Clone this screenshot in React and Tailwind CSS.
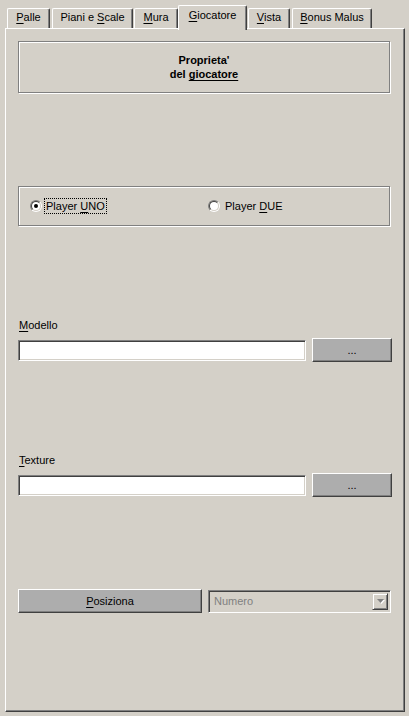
import React from "react";

const U = ({ children }) => <span className="underline underline-offset-[2px]">{children}</span>;

function Tab({ children, w, ml, selected }) {
  if (selected) {
    return (
      <div
        className={`relative z-10 ${ml} ${w} h-[25px] -mb-[2px] bg-[#d4d0c8] border-t border-l border-white border-r border-r-[#404040] shadow-[inset_-1px_0_#808080] rounded-t-[2px] flex justify-center pt-[2px]`}
      >
        <span className="leading-[14px]">{children}</span>
      </div>
    );
  }
  return (
    <div
      className={`${ml} ${w} h-[20px] bg-[#d4d0c8] border-t border-l border-white border-r border-r-[#404040] shadow-[inset_-1px_0_#808080] rounded-t-[2px] flex justify-center pt-[1px]`}
    >
      <span className="leading-[14px]">{children}</span>
    </div>
  );
}

function Radio({ checked }) {
  return (
    <span className="box-border w-[12px] h-[12px] rounded-full border border-t-[#808080] border-l-[#808080] border-b-white border-r-white flex">
      <span className="box-border w-full h-full rounded-full border border-t-[#404040] border-l-[#404040] border-b-[#d4d0c8] border-r-[#d4d0c8] bg-white flex items-center justify-center">
        {checked && <span className="w-[4px] h-[4px] rounded-full bg-black" />}
      </span>
    </span>
  );
}

function GrayButton({ children, w, h }) {
  return (
    <div
      className={`${w} ${h} box-border bg-[#adadad] border-t border-l border-white border-r border-b border-r-[#404040] border-b-[#404040] shadow-[inset_-1px_-1px_#808080] flex items-center justify-center leading-[14px]`}
    >
      {children}
    </div>
  );
}

function TextInput() {
  return (
    <div className="w-[288px] h-[21px] box-border bg-white border border-t-[#808080] border-l-[#808080] border-b-white border-r-white shadow-[inset_1px_1px_#404040,inset_-1px_-1px_#d4d0c8]" />
  );
}

export default function App() {
  return (
    <div className="w-[409px] h-[716px] bg-[#d4d0c8] font-['Liberation_Sans',Arial,sans-serif] text-[11px] text-black overflow-hidden">
      {/* tabs */}
      <div className="h-[28px] flex items-end">
        <Tab w="w-[43px]" ml="ml-[7px]"><U>P</U>alle</Tab>
        <Tab w="w-[81px]" ml="ml-[2px]">Piani e <U>S</U>cale</Tab>
        <Tab w="w-[44px]" ml="ml-[1px]"><U>M</U>ura</Tab>
        <Tab w="w-[69px]" ml="ml-0" selected><U>G</U>iocatore</Tab>
        <Tab w="w-[42px]" ml="ml-[1px]"><U>V</U>ista</Tab>
        <Tab w="w-[80px]" ml="ml-[2px]"><U>B</U>onus Malus</Tab>
      </div>

      {/* panel */}
      <div className="ml-[5px] w-[400px] h-[684px] box-border border-t border-l border-white border-r border-b border-r-[#404040] border-b-[#404040] shadow-[inset_-1px_-1px_#808080] pl-[12px] flex flex-col">
        {/* group 1 */}
        <div className="mt-[12px] w-[372px] h-[52px] box-border border border-[#808080] shadow-[inset_1px_1px_#fff,1px_1px_#fff] flex flex-col items-center justify-center font-bold leading-[14px]">
          <span>Proprieta'</span>
          <span>
            del <U>giocatore</U>
          </span>
        </div>

        {/* radio group */}
        <div className="mt-[93px] w-[372px] h-[40px] box-border border border-[#808080] shadow-[inset_1px_1px_#fff,1px_1px_#fff] flex items-center pl-[11px]">
          <div className="w-[178px] flex items-center">
            <Radio checked />
            <span className="ml-[2px] h-[16px] px-[1px] border border-dotted border-black flex items-center leading-[14px]">
              <span>
                Player <U>U</U>NO
              </span>
            </span>
          </div>
          <div className="flex items-center">
            <Radio />
            <span className="ml-[5px] leading-[14px]">
              Player <U>D</U>UE
            </span>
          </div>
        </div>

        {/* Modello */}
        <div className="mt-[92px] h-[14px] leading-[14px] pl-[1px]">
          <U>M</U>odello
        </div>
        <div className="mt-[6px] h-[24px] flex items-center">
          <TextInput />
          <div className="ml-[6px]">
            <GrayButton w="w-[80px]" h="h-[24px]">...</GrayButton>
          </div>
        </div>

        {/* Texture */}
        <div className="mt-[91px] h-[14px] leading-[14px] pl-[1px]">
          <U>T</U>exture
        </div>
        <div className="mt-[6px] h-[24px] flex items-center">
          <TextInput />
          <div className="ml-[6px]">
            <GrayButton w="w-[80px]" h="h-[24px]">...</GrayButton>
          </div>
        </div>

        {/* Posiziona row */}
        <div className="mt-[92px] h-[24px] flex items-center">
          <GrayButton w="w-[184px]" h="h-[24px]">
            <span>
              <U>P</U>osiziona
            </span>
          </GrayButton>
          <div className="ml-[6px] w-[183px] h-[23px] box-border bg-[#d4d0c8] border border-t-[#808080] border-l-[#808080] border-b-white border-r-white shadow-[inset_1px_1px_#404040,inset_-1px_-1px_#d4d0c8] flex items-center p-[2px]">
            <span className="flex-1 pl-[3px] text-[#808080] leading-[14px]">Numero</span>
            <div className="w-[16px] h-full box-border bg-[#d4d0c8] border border-t-[#d4d0c8] border-l-[#d4d0c8] border-b-[#404040] border-r-[#404040] shadow-[inset_1px_1px_#fff,inset_-1px_-1px_#808080] flex items-center justify-center">
              <svg width="9" height="6" viewBox="0 0 9 6">
                <path d="M1 1h7L4.5 5z" fill="#ffffff" transform="translate(1 1)" />
                <path d="M1 1h7L4.5 5z" fill="#808080" />
              </svg>
            </div>
          </div>
        </div>
      </div>
    </div>
  );
}
